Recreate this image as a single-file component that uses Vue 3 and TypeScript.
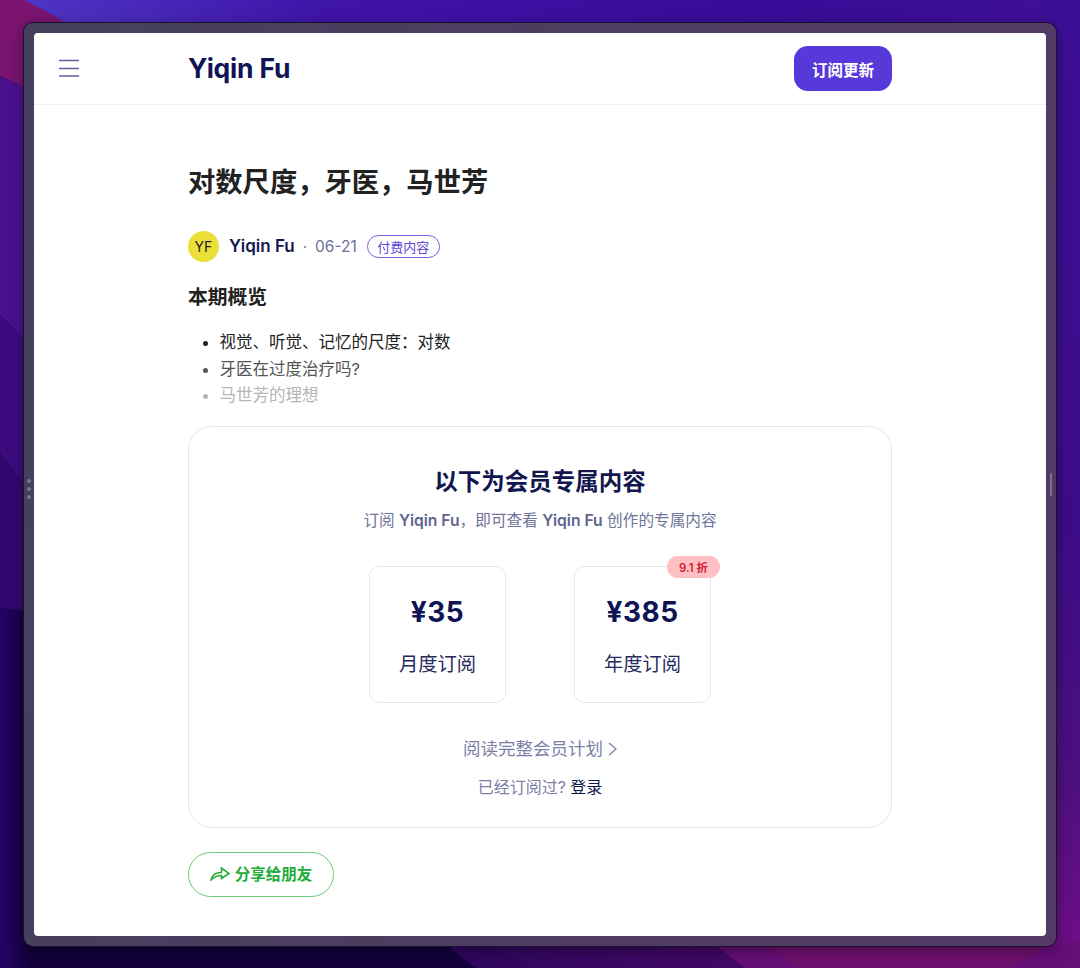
<script setup lang="ts">
interface Plan { price: string; label: string; badge?: string }
const plans: Plan[] = [
  { price: '¥35', label: '月度订阅' },
  { price: '¥385', label: '年度订阅', badge: '9.1 折' },
]
const items = [
  { text: '视觉、听觉、记忆的尺度：对数', cls: 'i1' },
  { text: '牙医在过度治疗吗?', cls: 'i2' },
  { text: '马世芳的理想', cls: 'i3' },
]
</script>

<template>
  <div class="desk">
    <svg class="wall" viewBox="0 0 1080 968" preserveAspectRatio="none" aria-hidden="true">
      <defs>
        <linearGradient id="top" x1="0" y1="0" x2="1" y2="0">
          <stop offset="0" stop-color="#4f38c6" />
          <stop offset="0.3" stop-color="#3f14a8" />
          <stop offset="0.7" stop-color="#380c98" />
          <stop offset="1" stop-color="#3e1096" />
        </linearGradient>
        <linearGradient id="right" x1="0" y1="0" x2="0" y2="1">
          <stop offset="0" stop-color="#3c0f98" />
          <stop offset="0.55" stop-color="#3d0c88" />
          <stop offset="0.8" stop-color="#4c107e" />
          <stop offset="1" stop-color="#720e88" />
        </linearGradient>
        <linearGradient id="bottom" x1="0" y1="0" x2="1" y2="0">
          <stop offset="0" stop-color="#2e0660" />
          <stop offset="1" stop-color="#5a0a68" />
        </linearGradient>
        <linearGradient id="leftLow" x1="0" y1="0" x2="1" y2="0">
          <stop offset="0" stop-color="#25046a" />
          <stop offset="1" stop-color="#12013c" />
        </linearGradient>
      </defs>
      <rect width="1080" height="968" fill="#12013c" />
      <rect width="1080" height="40" fill="url(#top)" />
      <rect x="1040" width="40" height="968" fill="url(#right)" />
      <path d="M0 0H24C40 8 52 14 64 22L30 90 0 76Z" fill="#7a1470" />
      <path d="M0 76 30 90V345L0 315Z" fill="#4a1090" />
      <path d="M0 315 30 345V495L0 453Z" fill="#3c0b7e" />
      <path d="M0 453 30 495V612L0 608Z" fill="#33086e" />
      <path d="M0 608 30 612V968H0Z" fill="url(#leftLow)" />
      <path d="M448 946H1040V968H475Z" fill="url(#bottom)" />
      <path d="M717 946H1056L1080 940V968H745Z" fill="#660e78" />
      <path d="M765 946H1040V952L1010 968H800Z" fill="#6e1070" />
    </svg>

    <div class="frame">
      <span class="grip-dots"><i></i><i></i><i></i></span>
      <span class="grip-bar"></span>
      <div class="page">
        <header class="top">
          <div class="inner head-row">
            <svg class="menu" width="22" height="18" viewBox="0 0 22 18" aria-hidden="true">
              <path d="M1 1.500H21M1 9.500H21M1 17H21" stroke="#5f6299" stroke-width="1.6" fill="none" />
            </svg>
            <span class="brand">Yiqin Fu</span>
            <button class="sub">订阅更新</button>
          </div>
        </header>

        <main class="inner body">
          <h1>对数尺度，牙医，马世芳</h1>
          <div class="meta">
            <span class="avatar">YF</span>
            <span class="author">Yiqin Fu</span>
            <span class="dot">·</span>
            <span class="date">06-21</span>
            <span class="tag">付费内容</span>
          </div>
          <h2>本期概览</h2>
          <ul>
            <li v-for="it in items" :key="it.text" :class="it.cls">{{ it.text }}</li>
          </ul>

          <section class="pay">
            <h3>以下为会员专属内容</h3>
            <p class="lead">订阅 <b>Yiqin Fu</b>，即可查看 <b>Yiqin Fu</b> 创作的专属内容</p>
            <div class="plans">
              <div v-for="p in plans" :key="p.label" class="plan">
                <span v-if="p.badge" class="badge">{{ p.badge }}</span>
                <div class="price">{{ p.price }}</div>
                <div class="label">{{ p.label }}</div>
              </div>
            </div>
            <div class="more">
              阅读完整会员计划
              <svg width="9" height="14" viewBox="0 0 9 14" aria-hidden="true">
                <path d="M1 1 8 7 1 13" stroke="#7b7fa6" stroke-width="1.2" fill="none" />
              </svg>
            </div>
            <div class="login">已经订阅过? <span>登录</span></div>
          </section>

          <button class="share">
            <svg width="20" height="15" viewBox="0 0 20 15" aria-hidden="true">
              <path d="M1 14C2 9 6 6.500 11.500 6.500V2L19 7.500 11.500 12.500V9.500C7.500 9.500 4 11 1 14Z" stroke="#22ac38" stroke-width="1.6" stroke-linejoin="miter" fill="none" />
            </svg>
            分享给朋友
          </button>
        </main>
      </div>
    </div>
  </div>
</template>

<style>
html, body { margin: 0; background: #1a0350; }
</style>

<style scoped>
.desk {
  position: relative;
  width: 1080px;
  height: 968px;
  overflow: hidden;
  box-sizing: border-box;
  padding: 23px 24px 22px 24px;
  font-family: Inter, "Noto Sans CJK SC", sans-serif;
}
.wall { position: absolute; inset: 0; width: 100%; height: 100%; }
.frame {
  position: relative;
  height: 100%;
  box-sizing: border-box;
  padding: 10px;
  border-radius: 9px;
  background: linear-gradient(100deg, #45405e 0%, #4f3c60 60%, #553a68 100%);
  box-shadow: 0 0 0 1px #17102e, 0 4px 16px rgba(0, 0, 0, .4);
}
.grip-dots {
  position: absolute;
  left: 3px;
  top: 456px;
  display: flex;
  flex-direction: column;
  gap: 4px;
}
.grip-dots i { width: 4px; height: 4px; border-radius: 50%; background: #7b7690; }
.grip-bar {
  position: absolute;
  right: 4px;
  top: 450px;
  width: 2px;
  height: 23px;
  border-radius: 1px;
  background: #7f7090;
}
.page {
  height: 100%;
  background: #fff;
  border-radius: 4px;
  overflow: hidden;
}
.top { height: 71px; border-bottom: 1px solid #eeeef3; position: relative; }
.inner { width: 704px; margin-left: 154px; }
.head-row { display: flex; align-items: center; justify-content: space-between; height: 100%; }
.menu { position: absolute; left: 24px; top: 26px; }
.brand { font-size: 26.500px; font-weight: 700; color: #0f1454; letter-spacing: -.2px; margin-top: -2px; }
.sub {
  width: 98px;
  height: 45px;
  border: 0;
  border-radius: 14px;
  background: #5639d8;
  color: #fff;
  font: 700 15.500px Inter, "Noto Sans CJK SC", sans-serif;
  padding: 0;
}
.body { display: flow-root; }
h1 { margin: 60px 0 0; font-size: 27.300px; line-height: 36px; font-weight: 700; color: #222; }
.meta { display: flex; align-items: center; height: 32px; margin-top: 29px; }
.avatar {
  width: 31px; height: 31px; border-radius: 50%;
  background: #ebe039; color: #222;
  font-size: 14px; display: flex; align-items: center; justify-content: center;
}
.author { margin-left: 10px; font-size: 17px; font-weight: 600; color: #14184f; }
.dot { margin-left: 8px; font-size: 15px; color: #7b7fa6; }
.date { margin-left: 8px; font-size: 15.500px; color: #6c6f9a; }
.tag {
  margin-left: 10px;
  width: 73px; height: 23px;
  box-sizing: border-box;
  border: 1px solid #7a5fe0;
  border-radius: 12px;
  color: #5f45d8;
  font-size: 13px;
  display: flex; align-items: center; justify-content: center;
}
h2 { margin: 20px 0 0; font-size: 19.800px; line-height: 30px; font-weight: 700; color: #222; }
ul { margin: 17px 0 0; padding: 0 0 0 31.500px; font-size: 16.500px; line-height: 26.500px; }
.i1 { color: #222; }
.i2 { color: #555; }
.i3 { color: #b5b5b5; }
.pay {
  margin-top: 17px;
  height: 402px;
  box-sizing: border-box;
  border: 1px solid #e4e4ef;
  border-radius: 24px;
  display: flex;
  flex-direction: column;
  align-items: center;
}
h3 { margin: 38px 0 0; font-size: 23.500px; line-height: 34px; font-weight: 700; color: #11164f; }
.lead { margin: 10px 0 0; font-size: 15.650px; line-height: 24px; color: #70739b; }
.lead b { font-weight: 600; color: #60648f; }
.plans { display: flex; gap: 68px; margin-top: 33px; }
.plan {
  position: relative;
  width: 137px; height: 137px;
  box-sizing: border-box;
  border: 1px solid #e6e6f0;
  border-radius: 10px;
  text-align: center;
}
.price { margin-top: 27px; font-size: 28px; line-height: 36px; font-weight: 700; color: #0f1454; letter-spacing: .5px; }
.label { margin-top: 19px; font-size: 19.300px; line-height: 30px; color: #262a5c; }
.badge {
  position: absolute;
  top: -11px; right: -10px;
  width: 53px; height: 22px;
  border-radius: 11px;
  background: #ffc0c4;
  color: #d4202e;
  font-size: 11.500px;
  font-weight: 600;
  display: flex; align-items: center; justify-content: center;
}
.more {
  margin-top: 33px;
  font-size: 17.500px;
  line-height: 26px;
  color: #7b7fa6;
  display: flex; align-items: center; gap: 5px;
}
.login { margin-top: 13px; font-size: 16px; line-height: 24px; color: #7b7fa6; }
.login span { color: #11164f; }
.share {
  margin-top: 24px;
  width: 146px; height: 45px;
  box-sizing: border-box;
  display: flex; align-items: center; justify-content: center; gap: 5px;
  border: 1px solid #6ecb78;
  border-radius: 23px;
  background: #fff;
  color: #22ac38;
  font: 700 15.500px Inter, "Noto Sans CJK SC", sans-serif;
  padding: 0 0 2px;
}
</style>
